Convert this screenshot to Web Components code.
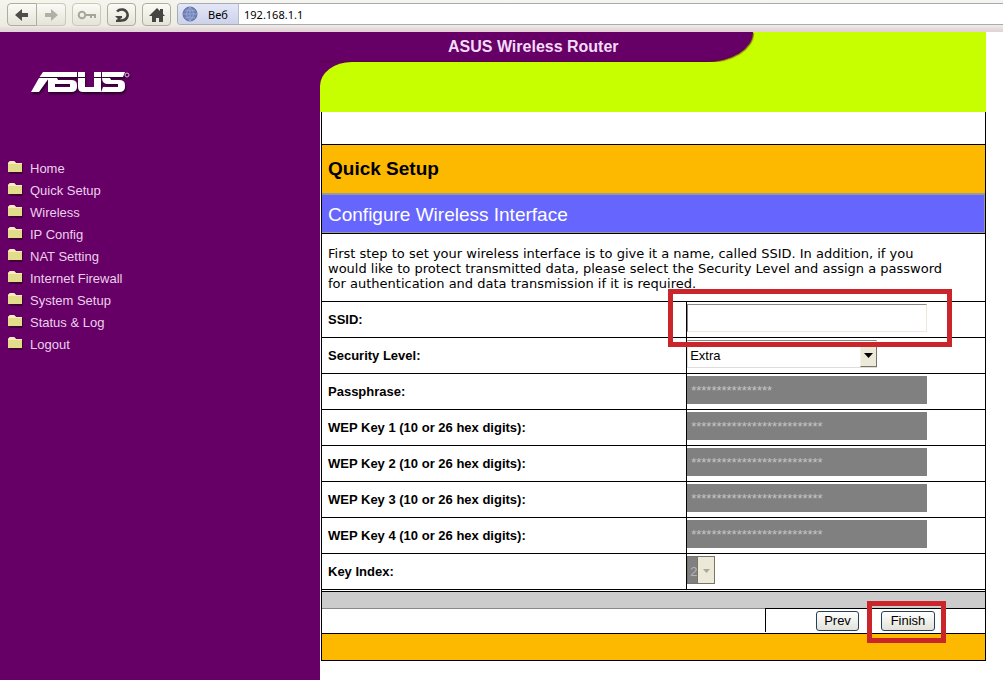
<!DOCTYPE html>
<html lang="en">
<head>
<meta charset="utf-8">
<title>ASUS Wireless Router</title>
<style>
  body { margin: 0; background: #fff; font-family: "Liberation Sans", Arial, sans-serif; font-size: 13px; color: #000; }
</style>
</head>
<body>
<router-page></router-page>

<template id="t-page">
  <style>
    :host { display: flex; flex-direction: column; min-height: 100vh; }
    .body { flex: 1; display: flex; }
    main { flex: 1; min-width: 0; margin-right: 17px; }
  </style>
  <browser-bar></browser-bar>
  <div class="body">
    <side-menu></side-menu>
    <main>
      <page-banner>ASUS Wireless Router</page-banner>
      <setup-panel></setup-panel>
    </main>
  </div>
</template>

<template id="t-bar">
  <style>
    :host { display: flex; align-items: flex-start; box-sizing: border-box; height: 32px; padding: 3px 0 0 7px; gap: 6px;
      background: linear-gradient(#f5f5ee 0, #ecece1 26px, #ead8dd 29px, #ddd5d5 32px); }
    .group { display: flex; }
    button { box-sizing: border-box; width: 29px; height: 23px; padding: 0; display: flex; align-items: center; justify-content: center;
      border: 1px solid #adada2; border-radius: 4px; background: linear-gradient(#fbfbf6, #e4e4d8); }
    button:disabled { border-color: #c9c9bd; }
    .group button:first-child { border-radius: 4px 0 0 4px; width: 30px; }
    .group button:last-child { border-radius: 0 4px 4px 0; border-left: 0; }
    .address { flex: 1; display: flex; box-sizing: border-box; height: 22px; border: 1px solid #a5abb8; border-right: 0; border-radius: 4px 0 0 4px; background: #fff; overflow: hidden;
      font: 11px "Noto Sans", sans-serif; }
    label { display: flex; align-items: center; gap: 10px; box-sizing: border-box; width: 61px; padding-left: 4px; background: linear-gradient(#e4e7f6, #ccd2ea); border-right: 1px solid #b5bbd0; }
    input { flex: 1; min-width: 0; border: 0; padding: 0 5px; font: inherit; background: none; outline: 0; }
    svg { display: block; flex: none; }
  </style>
  <div class="group">
    <button aria-label="Back"><svg width="16" height="14" viewBox="0 0 16 14"><path d="M1 7 8 1v4h6v4H8v4z" fill="#4d4d49"/></svg></button>
    <button aria-label="Forward" disabled><svg width="16" height="14" viewBox="0 0 16 14"><path d="M15 7 8 1v4H2v4h6v4z" fill="#b0b0a6"/></svg></button>
  </div>
  <button aria-label="Log in" disabled><svg width="20" height="12" viewBox="0 0 20 12"><circle cx="5" cy="6" r="3.3" fill="none" stroke="#a6a69c" stroke-width="2"/><path d="M8 5h11v4h-2V7h-2v2h-2V7H8z" fill="#a6a69c"/></svg></button>
  <button aria-label="Reload"><svg width="18" height="18" viewBox="0 0 18 18"><path d="M4 5.500A6 5.500 0 1 1 9 14.500H7" fill="none" stroke="#454541" stroke-width="2.500"/><path d="M2 10h7v2l-2 1 1 3H3v-2l2-1z" fill="#454541"/></svg></button>
  <button aria-label="Home"><svg width="16" height="16" viewBox="0 0 16 16"><path d="M8 1 11 4V2h3v5l2 2h-2v6h-4v-4H7v4H3V9H0z" fill="#454541"/></svg></button>
  <div class="address">
    <label for="url"><svg width="16" height="16" viewBox="0 0 16 16"><circle cx="8" cy="8" r="7" fill="#7080b8" stroke="#5d6c9e"/><path d="M1 8h14M8 1v14M3 4q5 2 10 0M3 12q5-2 10 0M8 1q-7 7 0 14M8 1q7 7 0 14" fill="none" stroke="#9fadd8" stroke-width=".8"/></svg>Веб</label>
    <input id="url" value="192.168.1.1">
  </div>
</template>

<template id="t-side">
  <style>
    :host { display: block; flex: none; width: 320px; background: #606; }
    svg { display: block; }
    .logo { margin: 37px 0 0 28px; filter: drop-shadow(1px 2px 1px #2a002a); }
    div[role="list"] { margin: 52px 0 0; padding: 0 0 0 8px; }
  </style>
  <svg class="logo" width="104" height="36" viewBox="0 0 104 36" role="img" aria-label="ASUS">
    <path d="M15 3H49V8H11.500zM11 9 21 9 11 23H3z" fill="#fff"/>
    <path d="M20 9h7v9h15v-3H29q-5 0-5-6h5l1 2h13q6 0 6 5v2q0 5-6 5H20z" fill="#fff"/>
    <path d="M50 3h7v5h-7zM50 9h7v9h9V9h7v14H55q-5 0-5-5zM66 3h7v5h-7z" fill="#fff"/>
    <path d="M97 3H74v5h21zM74 9h8l1 2h8q6 0 6 5v2q0 5-6 5H73l2-5h15v-3H80q-6 0-6-6z" fill="#fff"/>
    <circle cx="99" cy="6" r="2" fill="none" stroke="#e0b8e0"/>
  </svg>
  <nav><div role="list">
    <menu-item role="listitem">Home</menu-item><menu-item role="listitem">Quick Setup</menu-item><menu-item role="listitem">Wireless</menu-item>
    <menu-item role="listitem">IP Config</menu-item><menu-item role="listitem">NAT Setting</menu-item><menu-item role="listitem">Internet Firewall</menu-item>
    <menu-item role="listitem">System Setup</menu-item><menu-item role="listitem">Status &amp; Log</menu-item><menu-item role="listitem">Logout</menu-item>
  </div></nav>
</template>

<template id="t-item">
  <style>
    :host { display: block; }
    a { display: flex; align-items: center; gap: 7px; height: 22px; color: #ecd0ec; text-decoration: none; font-size: 13px; }
    svg { display: block; flex: none; }
  </style>
  <a href="#"><svg width="15" height="14" viewBox="0 0 15 14"><path d="M1 3h14v10H2z" fill="#420038"/><path d="M0 2 2 0h4l2 2h6v9H0z" fill="#e3dc8a"/><path d="M0 2 2 0h4l2 2h6v1H0z" fill="#fbe9c0"/></svg><slot></slot></a>
</template>

<template id="t-banner">
  <style>
    :host { display: block; }
    .top { background: #c8ff00; }
    .tab { box-sizing: border-box; width: 65%; height: 30px; padding-left: 128px; background: #606; border-radius: 0 0 48px 0 / 0 0 30px 0; box-shadow: inset 0 -2px 1px -1px #58083c, 1px 1px 1px #8a7a10; }
    .low { position: relative; background: linear-gradient(90deg, #606 50%, #c8ff00 50%); }
    .field { height: 50px; background: #c8ff00; border-radius: 32px 0 0 0 / 24px 0 0 0; }
    h1 { margin: 0; font: bold 16px/29px "Liberation Sans", Arial, sans-serif; color: #f4dcf8; white-space: nowrap; }
  </style>
  <div class="top"><div class="tab"><h1><slot></slot></h1></div></div>
  <div class="low"><div class="field"></div></div>
</template>

<template id="t-panel">
  <style>
    :host { display: block; }
    .frame { margin-left: 1px; border: 1px solid #000; border-top: 0; }
    .blank { height: 32px; }
    h2, h3 { margin: 0; padding-left: 6px; font-family: inherit; }
    h2 { height: 48px; font-size: 19px; line-height: 48px; background: #fdb900; border-top: 1px solid #000; }
    h3 { height: 37px; font-size: 19px; line-height: 39px; font-weight: normal; color: #fff; background: #66f; border: solid #999; border-width: 2px 1px 1px 0; }
    p { margin: 0; padding: 12px 40px 10px 6px; border-top: 1px solid #000; font: 13px/15px "DejaVu Sans", sans-serif; }
    table { width: 100%; border-collapse: collapse; table-layout: fixed; border-bottom: 1px solid #000; }
    th, td { box-sizing: border-box; height: 36px; padding: 0; border-top: 1px solid #000; text-align: left; vertical-align: middle; }
    th { width: 55%; padding-left: 6px; font-size: 13px; }
    td { padding-bottom: 3px; border-left: 1px solid #000; }
    td > * { display: block; }
    .pick, .host { position: relative; }
    input, select { box-sizing: border-box; margin: 0; border-radius: 0; font: 13px "Liberation Sans", Arial, sans-serif; outline: 0; }
    input { width: 240px; height: 28px; padding: 0 3px; border: 1px solid #ece9d8; border-top-color: #888; border-left-color: #888; background: #fff; }
    input:disabled { border-color: #808080; background: #808080; color: #c4c4c4; }
    select { appearance: none; width: 190px; height: 28px; padding: 2px 2px 0; border: 1px solid #ddd; border-top-color: #888; background: #fff; color: #000; }
    .arrow { position: absolute; left: 173px; top: 5px; box-sizing: border-box; width: 17px; height: 22px; border: 1px solid; border-color: #f4f2e8 #77756a #77756a #f4f2e8; background: #ece9d8; pointer-events: none; }
    .small select { width: 28px; background: #808080; color: #b4b4b4; border-color: #77756a; opacity: 1; }
    .small .arrow { left: 10px; top: 0; width: 18px; height: 28px; border-color: #77756a; }
    .arrow svg { display: block; margin: 7px auto 0; }
    .small .arrow svg { margin-top: 12px; }
    .grey { height: 16px; margin-top: 1px; border-top: 1px solid #000; background: #ccc; }
    .actions { display: flex; justify-content: flex-end; height: 24px; border-top: 1px solid #888; }
    .cell { display: flex; align-items: center; gap: 22px; box-sizing: border-box; width: 220px; height: 24px; margin-top: -1px; padding-left: 50px; border: 1px solid #000; border-width: 1px 0 0 1px; }
    button { display: block; box-sizing: border-box; height: 20px; padding: 0; border: 1px solid #23405f; border-radius: 3px; background: linear-gradient(#fff, #e2e2da); font: 13px "Liberation Sans", Arial, sans-serif; color: #000; }
    .prev { width: 43px; } .finish { width: 54px; }
    .foot { height: 26px; border-top: 1px solid #000; background: #fdb900; }
    .mark { position: absolute; z-index: 2; box-sizing: border-box; border: 5px solid #c9252b; pointer-events: none; }
    .m1 { width: 284px; height: 58px; left: -19px; top: -15px; }
    .m2 { width: 79px; height: 42px; left: -14px; top: -10px; }
  </style>
  <form class="frame">
    <div class="blank"></div>
    <h2>Quick Setup</h2>
    <h3>Configure Wireless Interface</h3>
    <p>First step to set your wireless interface is to give it a name, called SSID. In addition, if you would like to protect transmitted data, please select the Security Level and assign a password for authentication and data transmission if it is required.</p>
    <table>
      <tr><th><label for="ssid">SSID:</label></th><td><div class="host"><input id="ssid"><span class="mark m1"></span></div></td></tr>
      <tr><th><label for="sec">Security Level:</label></th><td><div class="pick"><select id="sec"><option>Extra</option></select><span class="arrow"><svg width="9" height="5" viewBox="0 0 9 5"><path d="M0 0h9L4.500 5z"/></svg></span></div></td></tr>
      <tr><th><label for="pass">Passphrase:</label></th><td><input id="pass" disabled value="****************"></td></tr>
      <tr><th><label for="k1">WEP Key 1 (10 or 26 hex digits):</label></th><td><input id="k1" disabled value="**************************"></td></tr>
      <tr><th><label for="k2">WEP Key 2 (10 or 26 hex digits):</label></th><td><input id="k2" disabled value="**************************"></td></tr>
      <tr><th><label for="k3">WEP Key 3 (10 or 26 hex digits):</label></th><td><input id="k3" disabled value="**************************"></td></tr>
      <tr><th><label for="k4">WEP Key 4 (10 or 26 hex digits):</label></th><td><input id="k4" disabled value="**************************"></td></tr>
      <tr><th><label for="idx">Key Index:</label></th><td><div class="pick small"><select id="idx" disabled><option>2</option></select><span class="arrow"><svg width="7" height="4" viewBox="0 0 7 4"><path d="M0 0h7L3.500 4z" fill="#aca899"/></svg></span></div></td></tr>
    </table>
    <div class="grey"></div>
    <div class="actions"><div class="cell"><button type="button" class="prev">Prev</button><div class="host"><button type="button" class="finish">Finish</button><span class="mark m2"></span></div></div></div>
    <div class="foot"></div>
  </form>
</template>

<script>
  function define(name, id) {
    customElements.define(name, class extends HTMLElement {
      constructor() {
        super();
        this.attachShadow({ mode: "open" }).append(document.getElementById(id).content.cloneNode(true));
      }
    });
  }
  define("menu-item", "t-item");
  define("browser-bar", "t-bar");
  define("side-menu", "t-side");
  define("page-banner", "t-banner");
  define("setup-panel", "t-panel");
  define("router-page", "t-page");
</script>
</body>
</html>
